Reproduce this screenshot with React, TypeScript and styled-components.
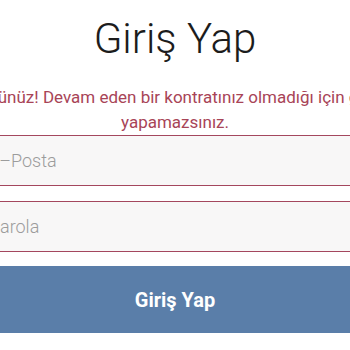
import React from "react";
import styled, { createGlobalStyle } from "styled-components";

const GlobalStyle = createGlobalStyle`
  html, body {
    margin: 0;
    padding: 0;
    background: #ffffff;
    overflow: hidden;
  }
  body {
    font-family: Roboto, "Liberation Sans", sans-serif;
  }
`;

const Page = styled.div`
  display: flex;
  justify-content: center;
  width: 350px;
  height: 350px;
  overflow: hidden;
`;

const Form = styled.form`
  flex: 0 0 420px;
  width: 420px;
  display: flex;
  flex-direction: column;
`;

const Title = styled.h1`
  margin: 0;
  padding-top: 14px;
  font-size: 42px;
  line-height: 49px;
  font-weight: 300;
  color: #1c1c1c;
  text-align: center;
`;

const Message = styled.p`
  margin: 22px 0 0;
  font-size: 17px;
  line-height: 25px;
  font-weight: 400;
  color: #a84457;
  text-align: center;
`;

const Field = styled.input<{ $gap: number }>`
  box-sizing: border-box;
  display: block;
  width: 100%;
  height: 51px;
  margin: ${(p) => p.$gap}px 0 0;
  padding: 0 23px;
  border: 1px solid #a4475e;
  border-radius: 0;
  background: #f8f7f7;
  font-family: Roboto, "Liberation Sans", sans-serif;
  font-size: 18px;
  font-weight: 300;
  color: #333;
  outline: none;
  &::placeholder {
    color: #9c9c9c;
    opacity: 1;
  }
`;

const SubmitButton = styled.button`
  box-sizing: border-box;
  display: block;
  width: 100%;
  height: 67px;
  margin-top: 14px;
  border: none;
  border-radius: 0;
  background: #5a7ea9;
  color: #ffffff;
  font-family: Roboto, "Liberation Sans", sans-serif;
  font-size: 20px;
  font-weight: 700;
  cursor: pointer;
`;

export default function App() {
  return (
    <>
      <GlobalStyle />
      <Page>
        <Form onSubmit={(e) => e.preventDefault()}>
          <Title>Giriş Yap</Title>
          <Message>
            Üzgünüz! Devam eden bir kontratınız olmadığı için giriş yapamazsınız.
          </Message>
          <Field $gap={0} type="email" placeholder="E–Posta" />
          <Field $gap={15} type="password" placeholder="Parola" />
          <SubmitButton type="submit">Giriş Yap</SubmitButton>
        </Form>
      </Page>
    </>
  );
}
